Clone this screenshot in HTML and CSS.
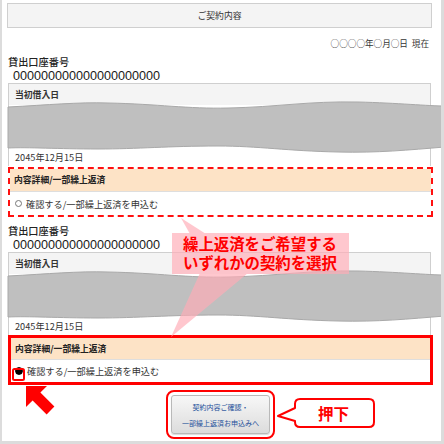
FILE: index.html
```html
<!DOCTYPE html>
<html lang="ja">
<head>
<meta charset="utf-8">
<title>ご契約内容</title>
<link rel="stylesheet" href="styles.css">
</head>
<body>
<div class="page">
  <div class="title-bar">ご契約内容</div>
  <div class="asof">○○○○年○月○日&nbsp;&nbsp;現在</div>

  <section class="contract first">
    <div class="label">貸出口座番号</div>
    <div class="acct">000000000000000000000</div>
    <div class="card">
      <div class="card-head">当初借入日</div>
      <svg class="wave" viewBox="0 0 437 49" width="437" height="49" aria-hidden="true">
        <path d="M0,5 C40,3 70,0 100,1 C150,2 180,7 220,6 C270,5 300,-1 350,0 C390,1 420,4 437,4 L437,45 C400,48 370,51 330,50 C280,49 250,44 210,44 C160,44 130,47 90,47 C50,47 20,45 0,46 Z" fill="#bfbfbf" stroke="#a9a9a9" stroke-width="1"/>
      </svg>
      <div class="date">2045年12月15日</div>
    </div>
    <div class="detail dashed">
      <div class="detail-head">内容詳細/一部繰上返済</div>
      <div class="detail-row"><span class="radio"></span><span class="row-text">確認する/一部繰上返済を申込む</span></div>
    </div>
  </section>

  <section class="contract second">
    <div class="label">貸出口座番号</div>
    <div class="acct">000000000000000000000</div>
    <div class="card">
      <div class="card-head">当初借入日</div>
      <svg class="wave" viewBox="0 0 437 49" width="437" height="49" aria-hidden="true">
        <path d="M0,5 C40,3 70,0 100,1 C150,2 180,7 220,6 C270,5 300,-1 350,0 C390,1 420,4 437,4 L437,45 C400,48 370,51 330,50 C280,49 250,44 210,44 C160,44 130,47 90,47 C50,47 20,45 0,46 Z" fill="#bfbfbf" stroke="#a9a9a9" stroke-width="1"/>
      </svg>
      <div class="date">2045年12月15日</div>
    </div>
    <div class="detail solid">
      <div class="detail-head">内容詳細/一部繰上返済</div>
      <div class="detail-row"><span class="radio checked"></span><span class="row-text">確認する/一部繰上返済を申込む</span></div>
    </div>
  </section>

  <div class="btn-wrap">
    <button class="next-btn" type="button"><span>契約内容ご確認・</span><span>一部繰上返済お申込みへ</span></button>
  </div>

  <svg class="overlay" viewBox="0 0 444 444" width="444" height="444" aria-hidden="true">
    <path d="M172,233 H349 V274 H172 Z M181,218 L206,234 L190,234 Z M200,273 L248,273 L171,337 Z" fill="rgba(255,172,183,0.68)"/>
    <rect x="13" y="369" width="11" height="11" rx="1.5" fill="none" stroke="#ff0000" stroke-width="2"/>
    <polygon points="26,386 47,386 40.4,392.6 54.4,406.6 46.6,414.4 32.6,400.4 26,407" fill="#ff0000"/>
    <path d="M300,399 H369 Q374,399 374,404 V422 Q374,427 369,427 H300 Q295,427 295,422 V421 L278,416 L295,408 V404 Q295,399 300,399 Z" fill="#ffffff" stroke="#ff0000" stroke-width="2" stroke-linejoin="round"/>
  </svg>

  <div class="callout">繰上返済をご希望する<br>いずれかの契約を選択</div>
  <div class="press">押下</div>
</div>
</body>
</html>
```

FILE: styles.css
```css
html, body {
  margin: 0;
  padding: 0;
  background: #ffffff;
}

body {
  font-family: "Noto Sans CJK JP", "Liberation Sans", sans-serif;
  color: #222;
}

.page {
  position: relative;
  width: 444px;
  height: 444px;
  box-sizing: border-box;
  border-left: 2px solid #dcdcdc;
  border-right: 3px solid #dcdcdc;
  border-bottom: 3px solid #dcdcdc;
  padding: 3px 9px 0 5px;
  overflow: hidden;
}

.title-bar {
  height: 25px;
  box-sizing: border-box;
  border: 1px solid #cfcfcf;
  background: #f4f4f4;
  font-size: 8.8px;
  line-height: 23px;
  text-align: center;
  color: #333;
}

.asof {
  margin-top: 9px;
  height: 12px;
  line-height: 12px;
  font-size: 8.6px;
  text-align: right;
  padding-right: 3px;
  color: #333;
}

.contract.first {
  margin-top: 6px;
}

.contract.second {
  margin-top: 7px;
}

.label {
  height: 14px;
  line-height: 14px;
  font-size: 10.2px;
  font-weight: 500;
  padding-left: 1px;
  color: #222;
}

.acct {
  height: 14px;
  line-height: 14px;
  font-family: "Liberation Sans", sans-serif;
  font-size: 12.6px;
  padding-left: 6px;
  color: #1a1a1a;
  letter-spacing: 0;
}

.card {
  margin: 0 1px;
  border: 1px solid #cfcfcf;
  border-bottom: none;
  padding-bottom: 3px;
}

.card-head {
  height: 21px;
  background: #f4f4f4;
  font-size: 8.8px;
  font-weight: 700;
  line-height: 21px;
  padding-left: 6px;
  color: #333;
}

.wave {
  display: block;
  margin-top: -3px;
  margin-left: -1px;
  overflow: visible;
}

.date {
  height: 12px;
  line-height: 12px;
  font-size: 9.2px;
  padding-left: 6px;
  color: #333;
}

.detail {
  margin: 0 -1px 0 1px;
  height: 50px;
  box-sizing: border-box;
  display: flex;
  flex-direction: column;
}

.detail.dashed {
  margin-top: 1px;
  border: 2px dashed #ff1010;
}

.detail.solid {
  margin-top: 0;
  border: 3px solid #ff0000;
}

.detail-head {
  flex: 0 0 22px;
  background: #fde3c6;
  border-bottom: 1px solid #dedede;
  font-size: 8.8px;
  font-weight: 700;
  line-height: 22px;
  padding-left: 4px;
  color: #222;
}

.solid .detail-head {
  flex-basis: 21px;
  line-height: 21px;
}

.detail-row {
  flex: 1;
  display: flex;
  align-items: center;
  padding-left: 5px;
  font-size: 9.2px;
  color: #333;
}

.radio {
  width: 7px;
  height: 7px;
  box-sizing: border-box;
  border: 1px solid #777;
  border-radius: 50%;
  background: #fff;
  margin-right: 4px;
}

.solid .radio {
  margin-left: -1px;
}

.radio.checked {
  border: 1px solid #000;
  background: radial-gradient(circle, #000 55%, #000 100%);
  width: 8px;
  height: 8px;
}

.btn-wrap {
  margin-top: 10px;
  display: flex;
  justify-content: center;
  padding-left: 2px;
}

.next-btn {
  width: 99px;
  height: 39px;
  box-sizing: border-box;
  border: 1px solid #b9b9b9;
  border-radius: 3px;
  background: linear-gradient(#f7f7f7, #dcdcdc);
  font-family: "Noto Sans CJK JP", sans-serif;
  font-size: 7px;
  line-height: 16px;
  color: #23509a;
  display: flex;
  flex-direction: column;
  align-items: center;
  justify-content: center;
  padding: 0;
  outline: 2.5px solid #ff0000;
  outline-offset: 3px;
  box-shadow: 0 1px 1px rgba(0,0,0,0.15);
}

.overlay {
  position: absolute;
  left: -2px;
  top: 0;
  pointer-events: none;
}

.callout {
  position: absolute;
  left: 181px;
  top: 234px;
  font-size: 15.4px;
  font-weight: 700;
  line-height: 19px;
  color: #ff0000;
  white-space: nowrap;
}

.press {
  position: absolute;
  left: 316px;
  top: 403px;
  font-size: 15.5px;
  font-weight: 700;
  line-height: 20px;
  color: #ff0000;
}
```
